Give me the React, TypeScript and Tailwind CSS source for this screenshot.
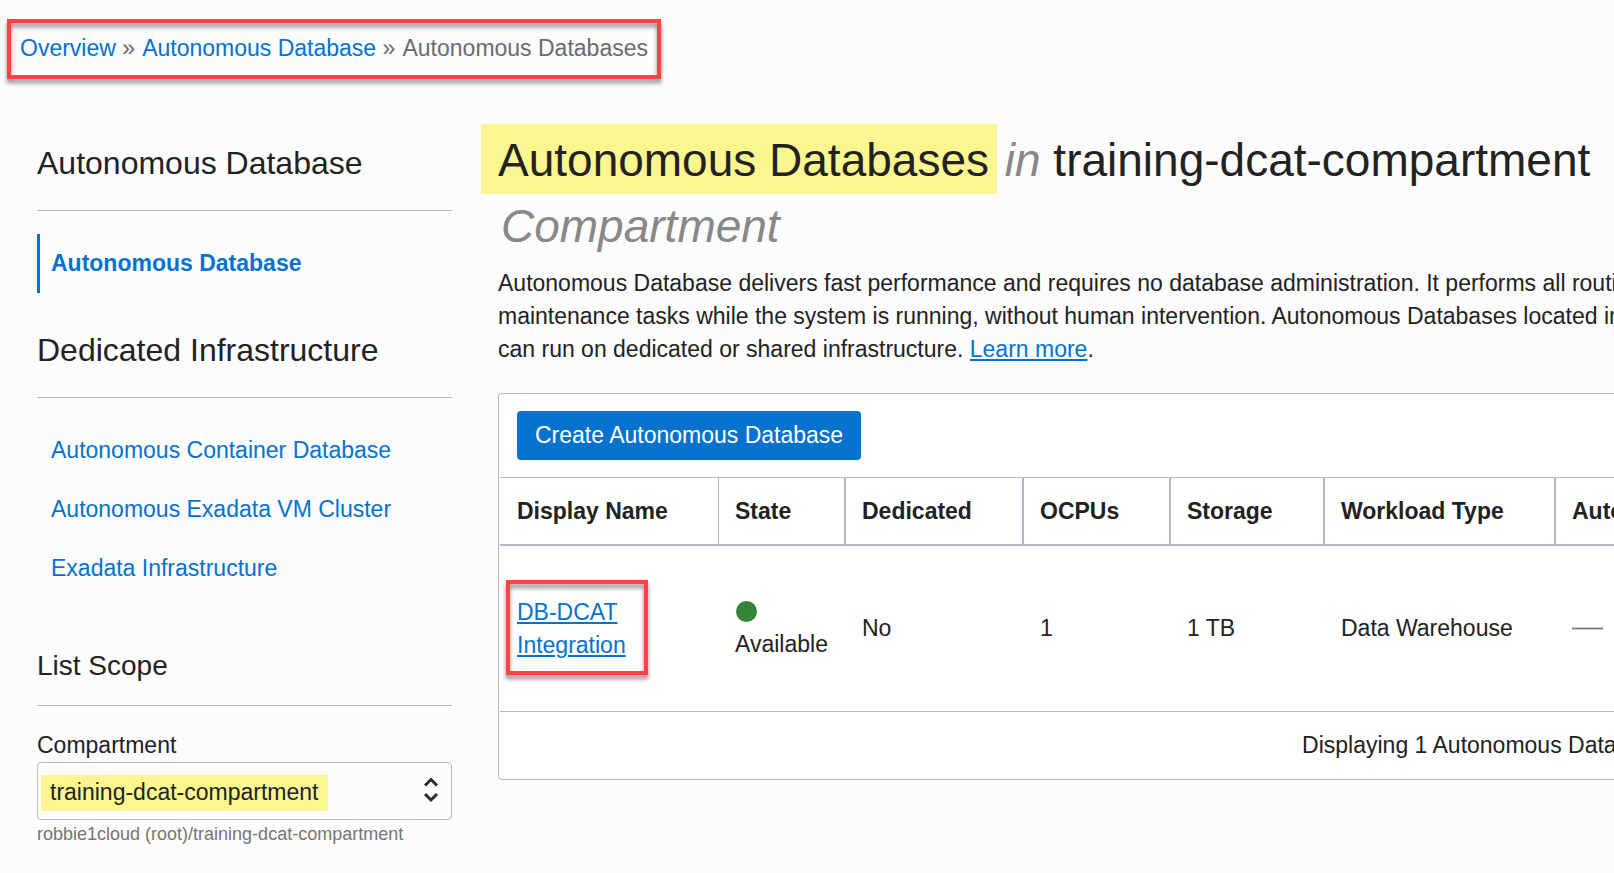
const navLink = "flex h-[59px] items-center px-[11px] border-l-[3px]";
const sideHeading = "border-b border-[#b3bac5] pt-px pb-6 text-[32px] leading-[45px]";

const columns = [
  { label: "Display Name", width: "w-[219px]", border: "border-r" },
  { label: "State", width: "w-[127px]", border: "border-r-2" },
  { label: "Dedicated", width: "w-[178px]", border: "border-r-2" },
  { label: "OCPUs", width: "w-[147px]", border: "border-r-2" },
  { label: "Storage", width: "w-[154px]", border: "border-r-2" },
  { label: "Workload Type", width: "w-[231px]", border: "border-r-2" },
  { label: "Autonomous Data Guard", width: "", border: "" },
];

function Callout({ className }: { className: string }) {
  return (
    <span
      aria-hidden="true"
      className={
        "pointer-events-none absolute border-4 border-[#ff4242] drop-shadow-[0_4px_2px_rgba(0,0,0,0.45)] " +
        className
      }
    />
  );
}

function Breadcrumb() {
  return (
    <nav aria-label="Breadcrumb" className="flex px-[7px] pt-[19px]">
      <div className="relative px-[13px] pt-[13px] pb-[14px] whitespace-nowrap text-[#6b6b6b]">
        <a href="#overview" className="text-[#0572ce]">Overview</a>{" "}
        <span className="mr-0.5">»</span>{" "}
        <a href="#autonomous-database" className="text-[#0572ce]">Autonomous Database</a>{" "}
        <span className="mr-0.5">»</span>{" "}
        <span>Autonomous Databases</span>
        <Callout className="inset-0" />
      </div>
    </nav>
  );
}

function Sidebar() {
  return (
    <aside className="w-[415px] shrink-0 pt-[61px]">
      <h2 className={sideHeading}>Autonomous Database</h2>
      <ul className="pt-[23px]">
        <li>
          <a href="#adb" aria-current="page" className={navLink + " border-[#0572ce] font-bold text-[#0572ce]"}>
            Autonomous Database
          </a>
        </li>
      </ul>

      <h2 className={"mt-[34px] " + sideHeading}>Dedicated Infrastructure</h2>
      <ul className="pt-[23px]">
        {["Autonomous Container Database", "Autonomous Exadata VM Cluster", "Exadata Infrastructure"].map((item) => (
          <li key={item}>
            <a href="#infrastructure" className={navLink + " border-transparent text-[#0572ce]"}>
              {item}
            </a>
          </li>
        ))}
      </ul>

      <h3 className="mt-12 border-b border-[#b3bac5] pb-[19px] text-[28px] leading-10">List Scope</h3>
      <label htmlFor="compartment" className="mt-[23px] block">Compartment</label>
      <div className="relative flex h-[58px] rounded border border-[#b3bac5]">
        <span aria-hidden="true" className="absolute top-3 left-[3px] h-9 w-[287px] bg-[#fcf690]" />
        <select
          id="compartment"
          className="relative w-full appearance-none bg-transparent px-3 pt-0.5 text-[23px] text-[#222]"
          defaultValue="training-dcat-compartment"
        >
          <option>training-dcat-compartment</option>
        </select>
        <svg
          aria-hidden="true"
          viewBox="0 0 14 26"
          className="pointer-events-none absolute top-[14px] right-[13px] h-[26px] w-[14px]"
          fill="none"
          stroke="#2a2a2a"
          strokeWidth="3"
        >
          <path d="M1 8.500 7 2.500l6 6M1 17l6 6 6-6" />
        </svg>
      </div>
      <p className="pt-px text-[18px] leading-[27px] text-[#757575]">robbie1cloud (root)/training-dcat-compartment</p>
    </aside>
  );
}

function DatabaseTable() {
  return (
    <section className="mt-[27px] rounded border border-[#b3bac5] bg-white p-px pb-0">
      <div className="px-[17px] pt-4 pb-[17px]">
        <button type="button" className="block h-[49px] rounded bg-[#0572ce] px-[18px] text-white">
          Create Autonomous Database
        </button>
      </div>
      <table className="w-full table-fixed border-separate border-spacing-0 text-left">
        <thead>
          <tr className="h-[69px]">
            {columns.map((c) => (
              <th
                key={c.label}
                scope="col"
                className={"border-t border-b-2 border-t-[#b3bac5] border-b-[#b3bac5] border-r-[#b3bac5] px-4 font-bold whitespace-nowrap first:pl-[17px] " + c.width + " " + c.border}
              >
                {c.label}
              </th>
            ))}
          </tr>
        </thead>
        <tbody>
          <tr className="h-[166px] *:border-b *:border-[#b3bac5] *:px-4">
            <td className="first:pl-[17px]">
              <div className="relative">
                <a href="#db-dcat" className="text-[#0572ce] underline decoration-2 underline-offset-2">
                  DB-DCAT Integration
                </a>
                <Callout className="-top-4 -left-[11px] h-[95px] w-[142px]" />
              </div>
            </td>
            <td>
              <span aria-hidden="true" className="mb-1.5 ml-px mt-[5px] block size-[21px] rounded-full bg-[#358539]" />
              <span className="block whitespace-nowrap">Available</span>
            </td>
            <td>No</td>
            <td>1</td>
            <td>1 TB</td>
            <td>Data Warehouse</td>
            <td>
              <span className="block h-[3px] w-[31px] border-y border-[#cfcfcf] bg-[#757575]" />
            </td>
          </tr>
        </tbody>
      </table>
      <p className="py-[17px] pr-42 text-right">Displaying 1 Autonomous Databases</p>
    </section>
  );
}

export default function App() {
  return (
    <div className="min-h-screen overflow-hidden bg-[#fcfcfc] font-['Liberation_Sans',Arial,sans-serif] text-[23px] leading-[33px] text-[#222]">
      <Breadcrumb />
      <div className="flex gap-[46px] pl-[37px]">
        <Sidebar />
        <main className="w-[1350px] shrink-0 pt-12">
          <h1 className="text-[46px] leading-[66px]">
            <mark className="-mr-2 -ml-[17px] bg-[#fcf690] pt-[10px] pr-2 pb-2 pl-[17px] text-[#222]">Autonomous Databases</mark>{" "}
            <em className="ml-[3px] text-[#888]">in</em> training-dcat-compartment{" "}
            <em className="ml-[3px] text-[#888]">Compartment</em>
          </h1>
          <p className="mt-2">
            Autonomous Database delivers fast performance and requires no database administration. It performs all
            routine database maintenance tasks while the system is running, without human intervention. Autonomous
            Databases located in Oracle Public Cloud can run on dedicated or shared infrastructure.{" "}
            <a href="#learn-more" className="text-[#0572ce] underline decoration-2 underline-offset-2">Learn more</a>.
          </p>
          <DatabaseTable />
        </main>
      </div>
    </div>
  );
}
